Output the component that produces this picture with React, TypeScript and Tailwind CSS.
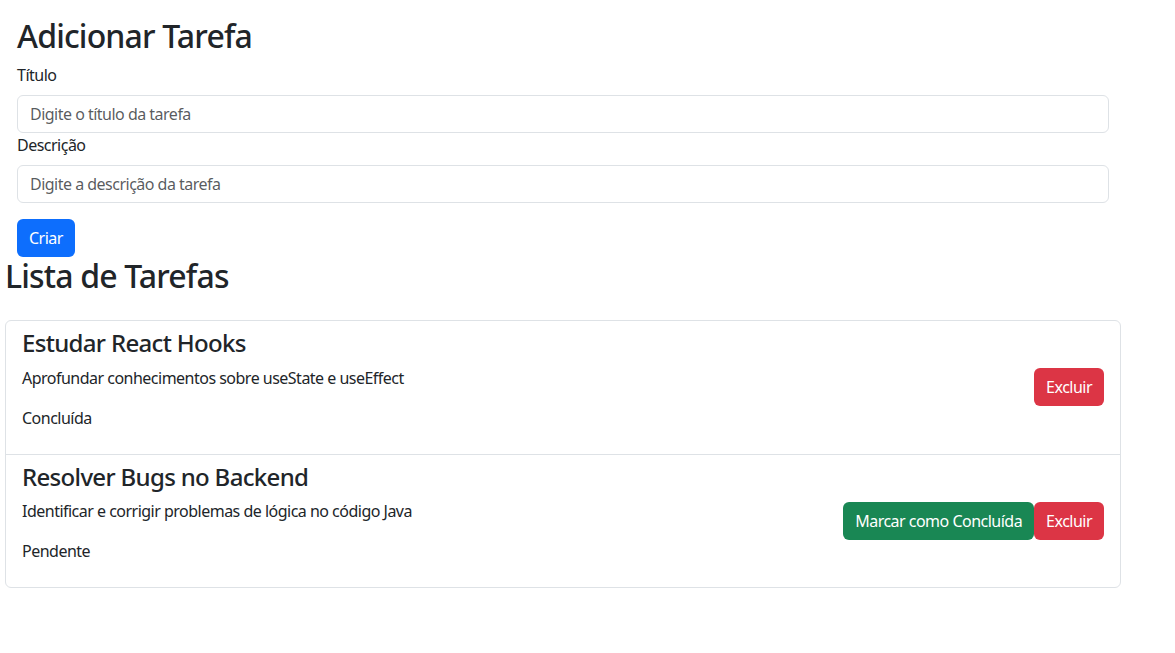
import React from "react";

const tasks = [
  {
    title: "Estudar React Hooks",
    description: "Aprofundar conhecimentos sobre useState e useEffect",
    done: true,
  },
  {
    title: "Resolver Bugs no Backend",
    description: "Identificar e corrigir problemas de lógica no código Java",
    done: false,
  },
];

export default function App() {
  return (
    <div
      className="min-h-screen bg-white px-[5px] text-[#212529] text-base leading-6 tracking-[-0.032em]"
      style={{ fontFamily: '"Noto Sans", "Open Sans", sans-serif' }}
    >
      {/* Form */}
      <div className="w-[1116px] px-3 pt-[17px]">
        <h2 className="text-[32px] leading-[38.4px] font-medium mb-2 tracking-[-0.026em]">Adicionar Tarefa</h2>
        <label className="block mb-2">Título</label>
        <input
          type="text"
          placeholder="Digite o título da tarefa"
          className="block w-full h-[38px] px-3 border border-[#dee2e6] rounded-[6px] placeholder:text-[#212529bf] outline-none"
        />
        <label className="block mb-2">Descrição</label>
        <input
          type="text"
          placeholder="Digite a descrição da tarefa"
          className="block w-full h-[38px] px-3 border border-[#dee2e6] rounded-[6px] placeholder:text-[#212529bf] outline-none"
        />
        <button className="mt-4 h-[38px] px-3 rounded-[6px] bg-[#0d6efd] text-white">Criar</button>
      </div>

      {/* List */}
      <h2 className="text-[32px] leading-[38.4px] font-medium tracking-[-0.026em]">Lista de Tarefas</h2>
      <ul className="mt-6 w-[1116px] border border-[#dee2e6] rounded-[6px]">
        {tasks.map((t, i) => (
          <li
            key={t.title}
            className={`flex items-center justify-between px-4 py-2 ${i > 0 ? "border-t border-[#dee2e6]" : ""}`}
          >
            <div>
              <h4 className="text-2xl leading-[28.8px] font-medium mb-2 tracking-[-0.028em]">{t.title}</h4>
              <p className="mb-4">{t.description}</p>
              <p className="mb-4">{t.done ? "Concluída" : "Pendente"}</p>
            </div>
            <div className="flex">
              {!t.done && (
                <button className="h-[38px] px-3 rounded-[6px] bg-[#198754] text-white">Marcar como Concluída</button>
              )}
              <button className="h-[38px] px-3 rounded-[6px] bg-[#dc3545] text-white">Excluir</button>
            </div>
          </li>
        ))}
      </ul>
    </div>
  );
}
